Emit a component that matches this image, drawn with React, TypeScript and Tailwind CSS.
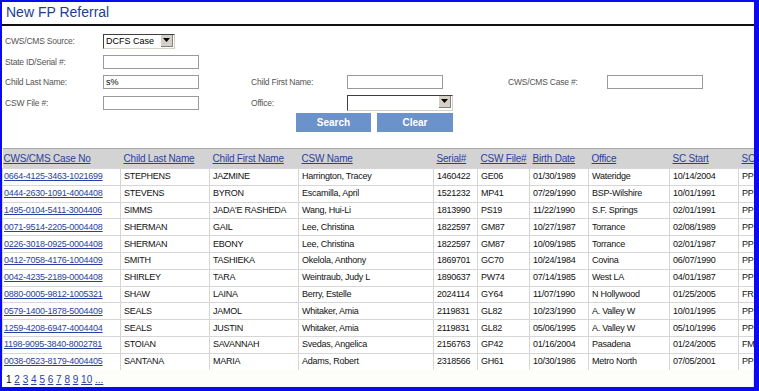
import React from 'react';

const ROWS = [
  ['0664-4125-3463-1021699', 'STEPHENS', 'JAZMINE', 'Harrington, Tracey', '1460422', 'GE06', '01/30/1989', 'Wateridge', '10/14/2004', 'PP'],
  ['0444-2630-1091-4004408', 'STEVENS', 'BYRON', 'Escamilla, April', '1521232', 'MP41', '07/29/1990', 'BSP-Wilshire', '10/01/1991', 'PP'],
  ['1495-0104-5411-3004406', 'SIMMS', "JADA'E RASHEDA", 'Wang, Hui-Li', '1813990', 'PS19', '11/22/1990', 'S.F. Springs', '02/01/1991', 'PP'],
  ['0071-9514-2205-0004408', 'SHERMAN', 'GAIL', 'Lee, Christina', '1822597', 'GM87', '10/27/1987', 'Torrance', '02/08/1989', 'PP'],
  ['0226-3018-0925-0004408', 'SHERMAN', 'EBONY', 'Lee, Christina', '1822597', 'GM87', '10/09/1985', 'Torrance', '02/01/1987', 'PP'],
  ['0412-7058-4176-1004409', 'SMITH', 'TASHIEKA', 'Okelola, Anthony', '1869701', 'GC70', '10/24/1984', 'Covina', '06/07/1990', 'PP'],
  ['0042-4235-2189-0004408', 'SHIRLEY', 'TARA', 'Weintraub, Judy L', '1890637', 'PW74', '07/14/1985', 'West LA', '04/01/1987', 'PP'],
  ['0880-0005-9812-1005321', 'SHAW', 'LAINA', 'Berry, Estelle', '2024114', 'GY64', '11/07/1990', 'N Hollywood', '01/25/2005', 'FR'],
  ['0579-1400-1878-5004409', 'SEALS', 'JAMOL', 'Whitaker, Amia', '2119831', 'GL82', '10/23/1990', 'A. Valley W', '10/01/1995', 'PP'],
  ['1259-4208-6947-4004404', 'SEALS', 'JUSTIN', 'Whitaker, Amia', '2119831', 'GL82', '05/06/1995', 'A. Valley W', '05/10/1996', 'PP'],
  ['1198-9095-3840-8002781', 'STOIAN', 'SAVANNAH', 'Svedas, Angelica', '2156763', 'GP42', '01/16/2004', 'Pasadena', '01/24/2005', 'FM'],
  ['0038-0523-8179-4004405', 'SANTANA', 'MARIA', 'Adams, Robert', '2318566', 'GH61', '10/30/1986', 'Metro North', '07/05/2001', 'PP'],
];

const HEADERS = ['CWS/CMS Case No', 'Child Last Name', 'Child First Name', 'CSW Name', 'Serial#', 'CSW File#', 'Birth Date', 'Office', 'SC Start', 'SC'];
const WIDTHS = [118, 89, 89, 135, 44, 52, 59, 81, 69, 30];

function Label({ children }: { children: React.ReactNode }) {
  return <span className="text-[8.5px] tracking-[-0.2px] text-[#555] leading-[14px]">{children}</span>;
}

function TextBox({ value = '' }: { value?: string }) {
  return (
    <div className="w-[96px] h-[14px] border border-[#9a9a9a] bg-white text-[9px] leading-[12px] pl-[2px] text-black">
      {value}
    </div>
  );
}

function Select({ value = '', width }: { value?: string; width: string }) {
  return (
    <div className={`${width} h-[15px] flex border-t border-l border-t-[#404040] border-l-[#404040] border-b border-r border-b-[#d4d0c8] border-r-[#d4d0c8] bg-white`}>
      <div className="flex-1 text-[9px] leading-[13px] pl-[2px] text-black">{value}</div>
      <div className="w-[12px] h-[12px] mr-[1px] bg-[#d4d0c8] border-r border-b border-[#808080] flex items-center justify-center">
        <svg width="7" height="4" viewBox="0 0 7 4">
          <path d="M0 0h7L3.5 4z" fill="#000" />
        </svg>
      </div>
    </div>
  );
}

export default function App() {
  return (
    <div
      className="w-[759px] h-[391px] overflow-hidden bg-[#0a0af0] pl-[2px] pt-[2px] pr-[5px] pb-[4px]"
      style={{ fontFamily: '"Liberation Sans", Arial, sans-serif' }}
    >
      <div className="h-full bg-white flex flex-col">
        <div className="h-[22px] pl-[4px] pt-[1px] text-[14px] leading-[18px] text-[#1c3e92]">New FP Referral</div>
        <div className="h-[2px] bg-[#111]" />

        {/* search form */}
        <div className="pl-[3px] pt-[8px]">
          <div className="grid grid-cols-[98px_148px_96px_161px_99px_96px] gap-y-[6px] items-center">
            <Label>CWS/CMS Source:</Label>
            <Select value="DCFS Case" width="w-[72px]" />
            <div /><div /><div /><div />

            <Label>State ID/Serial #:</Label>
            <TextBox />
            <div /><div /><div /><div />

            <Label>Child Last Name:</Label>
            <TextBox value="s%" />
            <Label>Child First Name:</Label>
            <TextBox />
            <Label>CWS/CMS Case #:</Label>
            <TextBox />

            <Label>CSW File #:</Label>
            <TextBox />
            <Label>Office:</Label>
            <Select width="w-[106px] h-[16px]" />
            <div /><div />
          </div>
          <div className="flex gap-[6px] pl-[291px] mt-[2px]">
            <button className="w-[75px] h-[19px] bg-[#6b92cb] text-white text-[10px] font-bold">Search</button>
            <button className="w-[76px] h-[19px] bg-[#6b92cb] text-white text-[10px] font-bold">Clear</button>
          </div>
        </div>

        {/* results */}
        <div className="mt-[16px] overflow-hidden">
          <table className="table-fixed border-collapse w-[766px]">
            <colgroup>
              {WIDTHS.map((w, i) => (
                <col key={i} style={{ width: w }} />
              ))}
            </colgroup>
            <thead>
              <tr className="h-[20px] bg-[#d3d3d3] border-t border-[#a8a8a8]">
                {HEADERS.map((h, i) => (
                  <th
                    key={h}
                    className={`${i === 0 ? 'pl-[1px]' : 'pl-[3px]'} text-left font-normal text-[10px] tracking-[-0.2px] text-[#2a3f9e] underline whitespace-nowrap overflow-hidden`}
                  >
                    {h}
                  </th>
                ))}
              </tr>
            </thead>
            <tbody>
              {ROWS.map((r) => (
                <tr key={r[0]} className="h-[16.8px]">
                  {r.map((c, i) => (
                    <td
                      key={i}
                      className={`${i === 0 ? 'pl-[1px] text-[#2a3f9e] underline' : 'pl-[3px] text-[#111]'} border border-[#d6d6d6] text-[9px] tracking-[-0.25px] leading-[15px] whitespace-nowrap overflow-hidden`}
                    >
                      {c}
                    </td>
                  ))}
                </tr>
              ))}
            </tbody>
          </table>
        </div>

        <div className="flex-1 border-r border-[#e2e2e2] pl-[4px] pt-[3px] text-[10px] leading-[14px] bg-[#fdfdfa]">
          <span className="text-black">1 </span>
          {['2', '3', '4', '5', '6', '7', '8', '9', '10', '...'].map((p) => (
            <React.Fragment key={p}>
              <span className="text-[#2a3f9e] underline">{p}</span>{' '}
            </React.Fragment>
          ))}
        </div>
      </div>
    </div>
  );
}
